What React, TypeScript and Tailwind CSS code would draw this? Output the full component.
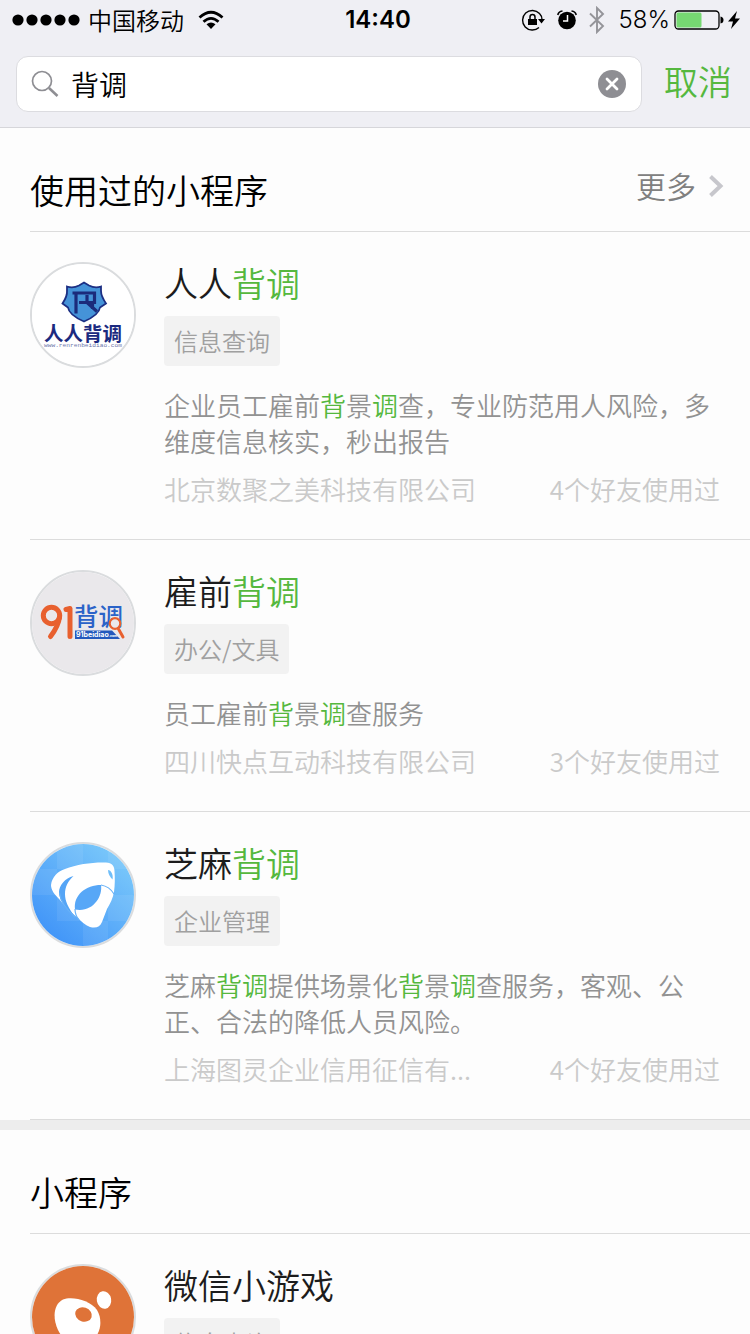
import type { ReactNode } from "react";

type Program = {
  name: string;
  tag: string;
  description?: string;
  company?: string;
  usage?: string;
  logo: ReactNode;
};

/* Characters of the query are picked out in green, as "[...]" in the source strings. */
function Marked({ text }: { text: string }) {
  return (
    <>
      {text.split(/(\[[^\]]+\])/).map((part, i) =>
        part.startsWith("[") ? (
          <span key={i} className="text-[#55b83e]">
            {part.slice(1, -1)}
          </span>
        ) : (
          part
        ),
      )}
    </>
  );
}

function ShieldLogo() {
  return (
    <svg viewBox="0 0 102 102" className="size-full bg-white" aria-hidden="true">
      <path
        d="M52 18.500L57 21.500Q63 24.500 69 22.500L69 27Q69 32 74 39.500L68 43.500Q67 51 52 57.500Q37 51 36 43.500L30.500 39.500Q35.500 32 35 27L35 22.500Q41 24.500 47 21.500Z"
        fill="#4593d8"
        stroke="#1c2f83"
        strokeWidth="1.800"
      />
      <path d="M40.500 29H62.500V38.500H47M44 29V49.500M55 31V38.500L65 47.500M60.500 40V45" fill="none" stroke="#1b2b7b" strokeWidth="3.200" />
      <text x="51" y="76.500" textAnchor="middle" fontSize="19.500" fontWeight="700" fill="#1b2a80" fontFamily="'Noto Sans CJK SC', sans-serif">
        人人背调
      </text>
      <text x="51" y="82.500" textAnchor="middle" fontSize="6.200" fill="#6e76ab" fontFamily="'Liberation Mono', monospace">
        www.renrenbeidiao.com
      </text>
    </svg>
  );
}

function NinetyOneLogo() {
  return (
    <svg viewBox="0 0 102 102" className="size-full bg-[#eae8eb]" aria-hidden="true">
      <g fill="none" stroke="#e8602f" strokeWidth="5" strokeLinecap="round" strokeLinejoin="round">
        <circle cx="19.500" cy="43.500" r="8.200" />
        <path d="M27.500 45Q26.500 54 18.500 64.500M34 37.500L38 36.500V64.500" />
      </g>
      <text x="42" y="54" fontSize="24.500" fontWeight="500" fill="#2b63c8" fontFamily="'Noto Sans CJK SC', sans-serif">
        背调
      </text>
      <path d="M43 58.500H80L88 67H43Z" fill="#2459bd" />
      <text x="44" y="65.300" fontSize="7" fontWeight="700" fill="#fff" fontFamily="Inter, sans-serif">
        91beidiao<tspan fontSize="3.500">.com</tspan>
      </text>
      <circle cx="83" cy="51.500" r="5.300" fill="#eae8eb" stroke="#e8602f" strokeWidth="2.200" />
      <path d="M86.500 57L91 65" stroke="#e8602f" strokeWidth="3" strokeLinecap="round" />
    </svg>
  );
}

function SesameLogo() {
  return (
    <svg viewBox="0 0 102 102" className="size-full" aria-hidden="true">
      <defs>
        <linearGradient id="sky" x1="0.100" y1="0.900" x2="0.800" y2="0.100">
          <stop offset="0" stopColor="#3f93f8" />
          <stop offset="1" stopColor="#78c6fa" />
        </linearGradient>
      </defs>
      <rect width="102" height="102" fill="url(#sky)" />
      <path
        d="M25 0H51V25H25ZM76 0H102V25H76ZM51 25H76V51H51ZM0 25H25V51H0ZM25 51H51V77H25ZM76 51H102V77H76ZM51 77H76V102H51Z"
        fill="#fff"
        opacity="0.070"
      />
      <path
        d="M19 41C20 33 26 27 33 25C45 20 62 18 74 18.500C80 19 82.500 22 82.500 27C83 34 83 41 82 48C81 54 78 60 75 65L70 78C68 83 64 84.500 58 83C53 81 49 77 46 74C38 68 32 61 28 56C22 50 19 46 19 41Z"
        fill="#fff"
      />
      <path d="M43 65.500C41 51 54 41 69 41C71 53 60 69 43 65.500Z" fill="#57a7f7" />
      <path d="M41.500 32C33 34 27 42 27 48C27 57 35 66 43 73C36 63 33 57 33 50C33 43 36 37 41.500 32Z" fill="#55a5f6" />
      <path d="M27.500 49C28.500 58 35 66 43 73M43 65C43 69 44.500 73 47 76M69 41C75 42 79 45 82 50" fill="none" stroke="#69b2f7" strokeWidth="1.200" />
      <path d="M76 26C79 26 81.500 31 80.500 35.500C78 33 76 30 76 26Z" fill="#6fbef9" />
    </svg>
  );
}

function GameLogo() {
  return (
    <svg viewBox="0 0 102 102" className="size-full bg-[#df7338]" aria-hidden="true">
      <ellipse cx="72" cy="34" rx="7.200" ry="8.800" transform="rotate(-10 72 34)" fill="#fff" />
      <path
        d="M31 33.500C40 30 58 34 65 44C71 54 69 68 59 76C48 83 32 77 26 64C20 51 22 38 31 33.500Z"
        fill="#fff"
      />
      <ellipse cx="51.500" cy="48.500" rx="8.500" ry="7" transform="rotate(18 51.500 48.500)" fill="#df7338" />
    </svg>
  );
}

const used: Program[] = [
  {
    name: "人人[背调]",
    tag: "信息查询",
    description: "企业员工雇前[背]景[调]查，专业防范用人风险，多维度信息核实，秒出报告",
    company: "北京数聚之美科技有限公司",
    usage: "4个好友使用过",
    logo: <ShieldLogo />,
  },
  {
    name: "雇前[背调]",
    tag: "办公/文具",
    description: "员工雇前[背]景[调]查服务",
    company: "四川快点互动科技有限公司",
    usage: "3个好友使用过",
    logo: <NinetyOneLogo />,
  },
  {
    name: "芝麻[背调]",
    tag: "企业管理",
    description: "芝麻[背调]提供场景化[背]景[调]查服务，客观、公正、合法的降低人员风险。",
    company: "上海图灵企业信用征信有...",
    usage: "4个好友使用过",
    logo: <SesameLogo />,
  },
];

const others: Program[] = [{ name: "微信小游戏", tag: "信息查询", logo: <GameLogo /> }];

function StatusBar() {
  return (
    <div className="grid h-10 grid-cols-[1fr_auto_1fr] items-center px-3 text-2xl text-black">
      <div className="flex items-center gap-2">
        <svg viewBox="0 0 68 12" className="h-3 w-[68px]" aria-label="信号">
          <circle cx="6" cy="6" r="5.600" />
          <circle cx="20" cy="6" r="5.600" />
          <circle cx="34" cy="6" r="5.600" />
          <circle cx="48" cy="6" r="5.600" />
          <circle cx="62" cy="6" r="5.600" />
        </svg>
        <span>中国移动</span>
        <svg viewBox="0 0 26 20" className="ml-1.5 h-5 w-[26px]" fill="none" stroke="#000" strokeWidth="2.800" aria-label="无线网络">
          <path d="M1.500 7.500Q13-3 24.500 7.500" />
          <path d="M5.500 11.800Q13 5 20.500 11.800" />
          <path d="M8.500 14.300Q13 10.800 17.500 14.300L13 19Z" fill="#000" stroke="none" />
        </svg>
      </div>
      <time className="ml-1.5 font-[Inter] font-semibold">14:40</time>
      <div className="-mr-0.5 flex items-center justify-end">
        <svg viewBox="0 0 24 22" className="mr-3 h-[22px] w-6" aria-label="方向锁定">
          <path d="M18.500 4.500A9.800 9.800 0 1 0 18 18.500M18.500 4.500Q21 7 21 10.500" fill="none" stroke="#000" strokeWidth="1.400" />
          <path d="M17 10H24L20.500 14.500ZM7 10H16V16H7Z" />
          <path d="M9 10V8A2.500 2.500 0 0 1 14 8V10" fill="none" stroke="#000" strokeWidth="1.500" />
        </svg>
        <svg viewBox="0 0 20 20" className="mr-3 h-5 w-5" aria-label="闹钟">
          <circle cx="10" cy="10.500" r="8.800" />
          <path d="M10.500 5V11H6" fill="none" stroke="#fff" strokeWidth="1.500" />
          <path d="M.8 5Q1.500 1.500 5.500 1M19.200 5Q18.500 1.500 14.500 1" fill="none" stroke="#000" strokeWidth="1.600" />
        </svg>
        <svg viewBox="0 0 16 28" className="mr-3.5 h-7 w-4" fill="none" stroke="#949499" strokeWidth="1.900" aria-label="蓝牙">
          <path d="M1 7.500L14 20L8 26V2L14 8L1 20.500" />
        </svg>
        <span className="mr-1 font-[Inter]">58%</span>
        <svg viewBox="0 0 50 20" className="mr-1 h-5 w-[50px]" aria-label="电量">
          <rect x="1" y="1" width="44" height="18" rx="3.500" fill="none" stroke="#000" strokeWidth="1.300" />
          <rect x="2.500" y="2.500" width="25" height="15" rx="1.500" fill="#76d972" />
          <path d="M46.500 6.500Q49.500 7 49.500 10T46.500 13.500Z" />
        </svg>
        <svg viewBox="0 0 12 20" className="h-5 w-3" aria-label="充电中">
          <path d="M9 1L0 11.500H5L3 19L12 8.500H7Z" />
        </svg>
      </div>
    </div>
  );
}

function SearchBar() {
  return (
    <form className="flex items-center gap-[22px] pt-4 pr-[18px] pb-[15px] pl-4">
      <div className="flex h-14 min-w-0 flex-1 items-center gap-3 rounded-xl border border-[#dcdce0] bg-white pr-[15px] pl-3.5">
        <svg viewBox="0 0 28 28" className="size-7 shrink-0" fill="none" stroke="#8e8e93" aria-hidden="true">
          <circle cx="11" cy="11" r="9.500" strokeWidth="1.700" />
          <path d="M18 18L26.500 26" strokeWidth="2.500" />
        </svg>
        <input aria-label="搜索" defaultValue="背调" className="min-w-0 flex-1 bg-transparent text-[28px] leading-10 text-black outline-none" />
        <button type="button" aria-label="清除" className="shrink-0">
          <svg viewBox="0 0 28 28" className="size-7">
            <circle cx="14" cy="14" r="14" fill="#8e8e93" />
            <path d="M9 9L19 19M19 9L9 19" stroke="#fff" strokeWidth="2.800" strokeLinecap="round" />
          </svg>
        </button>
      </div>
      <button type="button" className="shrink-0 pb-1.5 text-[34px] leading-10 text-[#55b83e]">
        取消
      </button>
    </form>
  );
}

function SectionHeader({ title, more }: { title: string; more?: boolean }) {
  return (
    <div className="ml-[30px] flex h-[104px] items-center justify-between border-b border-[#dcdcdc] pt-5 pr-[26px]">
      <h2 className="text-[34px] text-black">{title}</h2>
      {more && (
        <a href="#more" className="flex items-center gap-3 pb-2 text-[30px] text-[#808080]">
          更多
          <svg viewBox="0 0 16 24" className="h-6 w-4" fill="none" stroke="#c7c7cc" strokeWidth="4" aria-hidden="true">
            <path d="M2.500 2.500L12.500 12L2.500 21.500" />
          </svg>
        </a>
      )}
    </div>
  );
}

function ProgramRow({ program }: { program: Program }) {
  return (
    <li className="ml-[30px] flex gap-7 border-b border-[#dcdcdc] pt-[30px] pr-[30px] pb-8">
      <div className="size-[106px] shrink-0 overflow-hidden rounded-full border-2 border-[#dadcde]">{program.logo}</div>
      <div className="min-w-0 flex-1">
        <h3 className="text-[34px] leading-[42px] text-[#1c1c1c]">
          <Marked text={program.name} />
        </h3>
        <span className="mt-3 inline-block rounded-sm bg-[#f2f2f2] px-2.5 align-top text-2xl leading-[50px] text-[#a0a0a0]">
          {program.tag}
        </span>
        {program.description && (
          <p className="mt-[21px] text-[26px] leading-9 text-[#929292]">
            <Marked text={program.description} />
          </p>
        )}
        {program.company && (
          <div className="mt-3 flex justify-between text-[26px] leading-9 text-[#cacaca]">
            <span>{program.company}</span>
            <span className="shrink-0">{program.usage}</span>
          </div>
        )}
      </div>
    </li>
  );
}

export default function App() {
  return (
    <div className="flex h-screen flex-col overflow-hidden bg-[#fdfdfd] font-['Noto_Sans_CJK_SC',sans-serif] font-[350]">
      <header className="shrink-0 border-b border-[#d6d6da] bg-[#efeff4]">
        <StatusBar />
        <SearchBar />
      </header>
      <main className="min-h-0 flex-1 overflow-y-auto [scrollbar-width:none]">
        <section>
          <SectionHeader title="使用过的小程序" more />
          <ul>
            {used.map((program) => (
              <ProgramRow key={program.name} program={program} />
            ))}
          </ul>
        </section>
        <section className="border-t-10 border-[#ededed]">
          <SectionHeader title="小程序" />
          <ul>
            {others.map((program) => (
              <ProgramRow key={program.name} program={program} />
            ))}
          </ul>
        </section>
      </main>
    </div>
  );
}
